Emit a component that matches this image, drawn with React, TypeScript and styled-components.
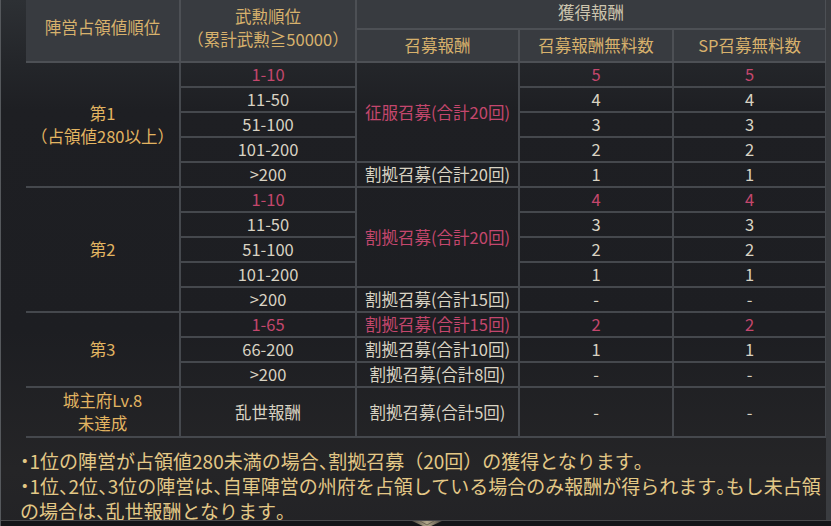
import React from "react"
import styled, { createGlobalStyle } from "styled-components"

const GlobalStyle = createGlobalStyle`
	html, body {
		margin: 0;
		padding: 0;
		background: #18191c;
	}
	body {
		font-family: "Noto Sans CJK JP", "Noto Sans", sans-serif;
	}
`

type Tone = "pink" | "plain" | "gold"

const toneColor: Record<Tone, string> = {
	pink: "#c4476d",
	plain: "#d9d3c3",
	gold: "#e2b461",
}

type Row = {
	rank: string
	rankTone?: Tone
	reward?: { text: string; span: number; tone: Tone }
	a: string
	b: string
	tone?: Tone
}

type Group = {
	label: React.ReactNode
	rows: Row[]
	tall?: boolean
}

const groups: Group[] = [
	{
		label: (
			<>
				第1
				<br />
				（占領値280以上）
			</>
		),
		rows: [
			{ rank: "1-10", rankTone: "pink", reward: { text: "征服召募(合計20回)", span: 4, tone: "pink" }, a: "5", b: "5", tone: "pink" },
			{ rank: "11-50", a: "4", b: "4" },
			{ rank: "51-100", a: "3", b: "3" },
			{ rank: "101-200", a: "2", b: "2" },
			{ rank: ">200", reward: { text: "割拠召募(合計20回)", span: 1, tone: "plain" }, a: "1", b: "1" },
		],
	},
	{
		label: "第2",
		rows: [
			{ rank: "1-10", rankTone: "pink", reward: { text: "割拠召募(合計20回)", span: 4, tone: "pink" }, a: "4", b: "4", tone: "pink" },
			{ rank: "11-50", a: "3", b: "3" },
			{ rank: "51-100", a: "2", b: "2" },
			{ rank: "101-200", a: "1", b: "1" },
			{ rank: ">200", reward: { text: "割拠召募(合計15回)", span: 1, tone: "plain" }, a: "-", b: "-" },
		],
	},
	{
		label: "第3",
		rows: [
			{ rank: "1-65", rankTone: "pink", reward: { text: "割拠召募(合計15回)", span: 1, tone: "pink" }, a: "2", b: "2", tone: "pink" },
			{ rank: "66-200", reward: { text: "割拠召募(合計10回)", span: 1, tone: "plain" }, a: "1", b: "1" },
			{ rank: ">200", reward: { text: "割拠召募(合計8回)", span: 1, tone: "plain" }, a: "-", b: "-" },
		],
	},
	{
		label: (
			<>
				城主府Lv.8
				<br />
				未達成
			</>
		),
		tall: true,
		rows: [
			{ rank: "乱世報酬", reward: { text: "割拠召募(合計5回)", span: 1, tone: "plain" }, a: "-", b: "-" },
		],
	},
]

export default function App() {
	return (
		<>
			<GlobalStyle />
			<Screen>
				<Viewport>
					<Content>
						<Table>
							<colgroup>
								<col style={{ width: 154 }} />
								<col style={{ width: 176 }} />
								<col style={{ width: 163 }} />
								<col style={{ width: 154 }} />
								<col style={{ width: 153 }} />
							</colgroup>
							<thead>
								<tr>
									<Head rowSpan={2} $lift>
										陣営占領値順位
									</Head>
									<Head rowSpan={2} $lift>
										武勲順位
										<br />
										（累計武勲≧50000）
									</Head>
									<Head colSpan={3} $top $muted>
										獲得報酬
									</Head>
								</tr>
								<tr>
									<Head $sub>召募報酬</Head>
									<Head $sub>召募報酬無料数</Head>
									<Head $sub>SP召募無料数</Head>
								</tr>
							</thead>
							<tbody>
								{groups.map((g, gi) =>
									g.rows.map((r, ri) => (
										<tr key={`${gi}-${ri}`}>
											{ri === 0 && (
												<Cell rowSpan={g.rows.length} $tone="gold" $tall={g.tall}>
													{g.label}
												</Cell>
											)}
											<Cell $tone={r.rankTone || "plain"} $tall={g.tall}>
												{r.rank}
											</Cell>
											{r.reward && (
												<Cell rowSpan={r.reward.span} $tone={r.reward.tone} $tall={g.tall}>
													{r.reward.text}
												</Cell>
											)}
											<Cell $tone={r.tone || "plain"} $tall={g.tall}>
												{r.a}
											</Cell>
											<Cell $tone={r.tone || "plain"} $tall={g.tall}>
												{r.b}
											</Cell>
										</tr>
									))
								)}
							</tbody>
						</Table>
						<Notes>
							<p>
								<Halt>・</Halt>1位の陣営が占領値280未満の場合<Halt>、</Halt>割拠召募（20回）の獲得となります<Halt>。</Halt>
							</p>
							<p>
								<Halt>・</Halt>1位<Halt>、</Halt>2位<Halt>、</Halt>3位の陣営は<Halt>、</Halt>自軍陣営の州府を占領している場合のみ報酬が得られます<Halt>。</Halt>もし未占領
								<br />
								の場合は<Halt>、</Halt>乱世報酬となります<Halt>。</Halt>
							</p>
						</Notes>
					</Content>
					<Track />
				</Viewport>
				<BottomBar>
					<svg width="30" height="6" viewBox="0 0 30 6">
						<defs>
							<linearGradient id="chev" x1="0" x2="1" y1="0" y2="0">
								<stop offset="0" stopColor="#4a463e" />
								<stop offset="0.5" stopColor="#b3a88c" />
								<stop offset="1" stopColor="#4a463e" />
							</linearGradient>
						</defs>
						<path d="M0 0 L30 0 L17 6 L13 6 Z" fill="url(#chev)" />
						<path d="M8 0 L15 4 L22 0" fill="none" stroke="#6a6352" strokeWidth="1" />
					</svg>
				</BottomBar>
			</Screen>
		</>
	)
}

const Screen = styled.div`
	width: 831px;
	height: 526px;
	box-sizing: border-box;
	overflow: hidden;
	display: flex;
	flex-direction: column;
	border-left: 1px solid #55585c;
	background: linear-gradient(
		180deg,
		#2d3034 0px,
		#24262a 62px,
		#1e1f23 110px,
		#1d1e22 330px,
		#252527 470px,
		#232326 100%
	);
`

const Viewport = styled.div`
	flex: 1;
	min-height: 0;
	display: flex;
`

const Content = styled.div`
	flex: 1;
	min-width: 0;
	overflow: hidden;
`

const Track = styled.div`
	width: 5px;
	background: #3a3c40;
`

const Table = styled.table`
	margin-left: 25px;
	width: 800px;
	table-layout: fixed;
	border-collapse: collapse;
	font-size: 16px;
	text-align: center;
`

const Head = styled.th<{ $lift?: boolean; $top?: boolean; $sub?: boolean; $muted?: boolean }>`
	padding: 0;
	font-weight: 400;
	font-size: 16.5px;
	line-height: 23px;
	color: ${(p) => (p.$muted ? "#ccc4ae" : "#d7b16c")};
	background: #383b40;
	border: 2px solid #4d5055;
	border-top: none;
	height: ${(p) => (p.$top ? "25px" : p.$sub ? "31px" : "auto")};
	padding-bottom: ${(p) => (p.$lift ? "6px" : p.$top ? "3px" : "0")};
	&:first-child {
		border-left: none;
	}
`

const Cell = styled.td<{ $tone: Tone; $tall?: boolean }>`
	padding: 0;
	height: ${(p) => (p.$tall ? "48px" : "23px")};
	line-height: 23px;
	font-size: 16.5px;
	color: ${(p) => toneColor[p.$tone]};
	border: 2px solid #45484d;
	tr > &:first-child {
		border-left: none;
	}
`

const Notes = styled.div`
	padding: 10px 0 0 19px;
	font-size: 19px;
	line-height: 25px;
	color: #e3c886;
	white-space: nowrap;
	p {
		margin: 0;
	}
`

const Halt = styled.span`
	font-feature-settings: "halt";
`

const BottomBar = styled.div`
	height: 5px;
	flex: none;
	display: flex;
	justify-content: center;
	align-items: flex-start;
	overflow: hidden;
	padding-left: 21px;
	background: #141518;
	border-top: 1px solid #4a4a4c;
`
